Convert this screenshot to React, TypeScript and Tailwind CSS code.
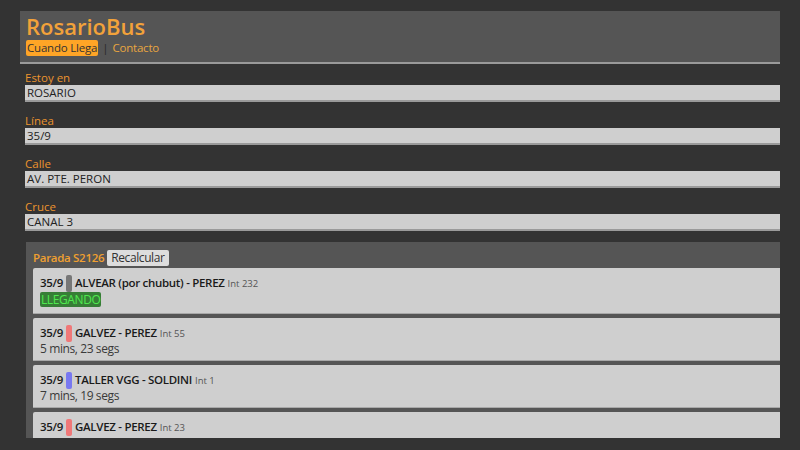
import React from 'react';

interface Arribo {
  id: number;
  linea: string;
  color: string;
  destino: string;
  interno: string;
  tiempo: string;
  llegando?: boolean;
}

const campos = [
  { label: 'Estoy en', value: 'ROSARIO' },
  { label: 'Línea', value: '35/9' },
  { label: 'Calle', value: 'AV. PTE. PERON' },
  { label: 'Cruce', value: 'CANAL 3' },
];

const arribos: Arribo[] = [
  { id: 1, linea: '35/9', color: 'bg-[#777777]', destino: 'ALVEAR (por chubut) - PEREZ', interno: 'Int 232', tiempo: 'LLEGANDO', llegando: true },
  { id: 2, linea: '35/9', color: 'bg-[#f07878]', destino: 'GALVEZ - PEREZ', interno: 'Int 55', tiempo: '5 mins, 23 segs' },
  { id: 3, linea: '35/9', color: 'bg-[#7878f0]', destino: 'TALLER VGG - SOLDINI', interno: 'Int 1', tiempo: '7 mins, 19 segs' },
  { id: 4, linea: '35/9', color: 'bg-[#f07878]', destino: 'GALVEZ - PEREZ', interno: 'Int 23', tiempo: '9 mins, 2 segs' },
];

const App: React.FC = () => {
  return (
    <div className="w-[800px] h-[450px] bg-[#333333] pt-[11px] overflow-hidden" style={{ fontFamily: '"Open Sans", "Liberation Sans", sans-serif' }}>
      <div className="mx-[20px] h-[427px] overflow-hidden">
        {/* header */}
        <div className="bg-[#555555] border-b-2 border-[#9a9a9a] pl-[6px] pt-[2px] h-[53px]">
          <h1 className="text-[22px] leading-[26px] font-semibold text-[#f2a23a]">RosarioBus</h1>
          <div className="flex items-center text-[11.5px] leading-[16px] mt-[1px] tracking-[-0.2px]">
            <span className="bg-[#ffa526] text-[#333333] px-[1px] rounded-[2px]">Cuando Llega</span>
            <span className="text-[#2a2a2a] mx-[4px]">|</span>
            <span className="text-[#e8a640]">Contacto</span>
          </div>
        </div>

        {/* formulario */}
        <div className="pl-[5px] pt-[6px]">
          {campos.map((c) => (
            <div key={c.label} className="mb-[11px]">
              <div className="text-[11.5px] leading-[15px] text-[#ec932e]">{c.label}</div>
              <div className="bg-[#cfcfcf] border-b-2 border-[#9a9a9a] text-[11.5px] leading-[15px] text-[#222222] pl-[2px]">
                {c.value}
              </div>
            </div>
          ))}
        </div>

        {/* parada */}
        <div className="ml-[6px] bg-[#555555] pl-[7px] pt-[8px] h-[200px]">
          <div className="flex items-center gap-[3px] mb-[2px]">
            <span className="text-[11.5px] leading-[16px] font-semibold tracking-[-0.3px] text-[#f0a030]">Parada S2126</span>
            <span className="bg-[#dddddd] text-[#333333] text-[12px] leading-[16px] tracking-[-0.4px] px-[4px] rounded-[2px]">Recalcular</span>
          </div>
          {arribos.map((a) => (
            <div
              key={a.id}
              className={`bg-[#cfcfcf] border-b border-[#a8a8a8] mb-[4px] pl-[7px] pt-[7px] rounded-tl-[2px] ${a.llegando ? 'pb-[6px]' : 'pb-[3px]'}`}
            >
              <div className="flex items-center h-[16px] text-[11.5px] leading-[16px] font-semibold tracking-[-0.3px] text-[#1a1a1a]">
                <span>{a.linea}</span>
                <span className={`${a.color} w-[6px] h-[17px] rounded-[2px] mx-[3px]`}></span>
                <span>{a.destino}</span>
                <span className="text-[9.5px] font-normal tracking-normal text-[#555555] ml-[3px] mt-[1px]">{a.interno}</span>
              </div>
              {a.llegando ? (
                <div className="flex pt-[1px]">
                  <span className="bg-[#367e36] text-[#4fe94f] text-[12px] leading-[15px] tracking-[-0.4px] px-[1px] rounded-[2px]">
                    {a.tiempo}
                  </span>
                </div>
              ) : (
                <div className="text-[12px] leading-[16px] tracking-[-0.4px] text-[#3a3a3a]">{a.tiempo}</div>
              )}
            </div>
          ))}
        </div>
      </div>
    </div>
  );
};

export default App;
